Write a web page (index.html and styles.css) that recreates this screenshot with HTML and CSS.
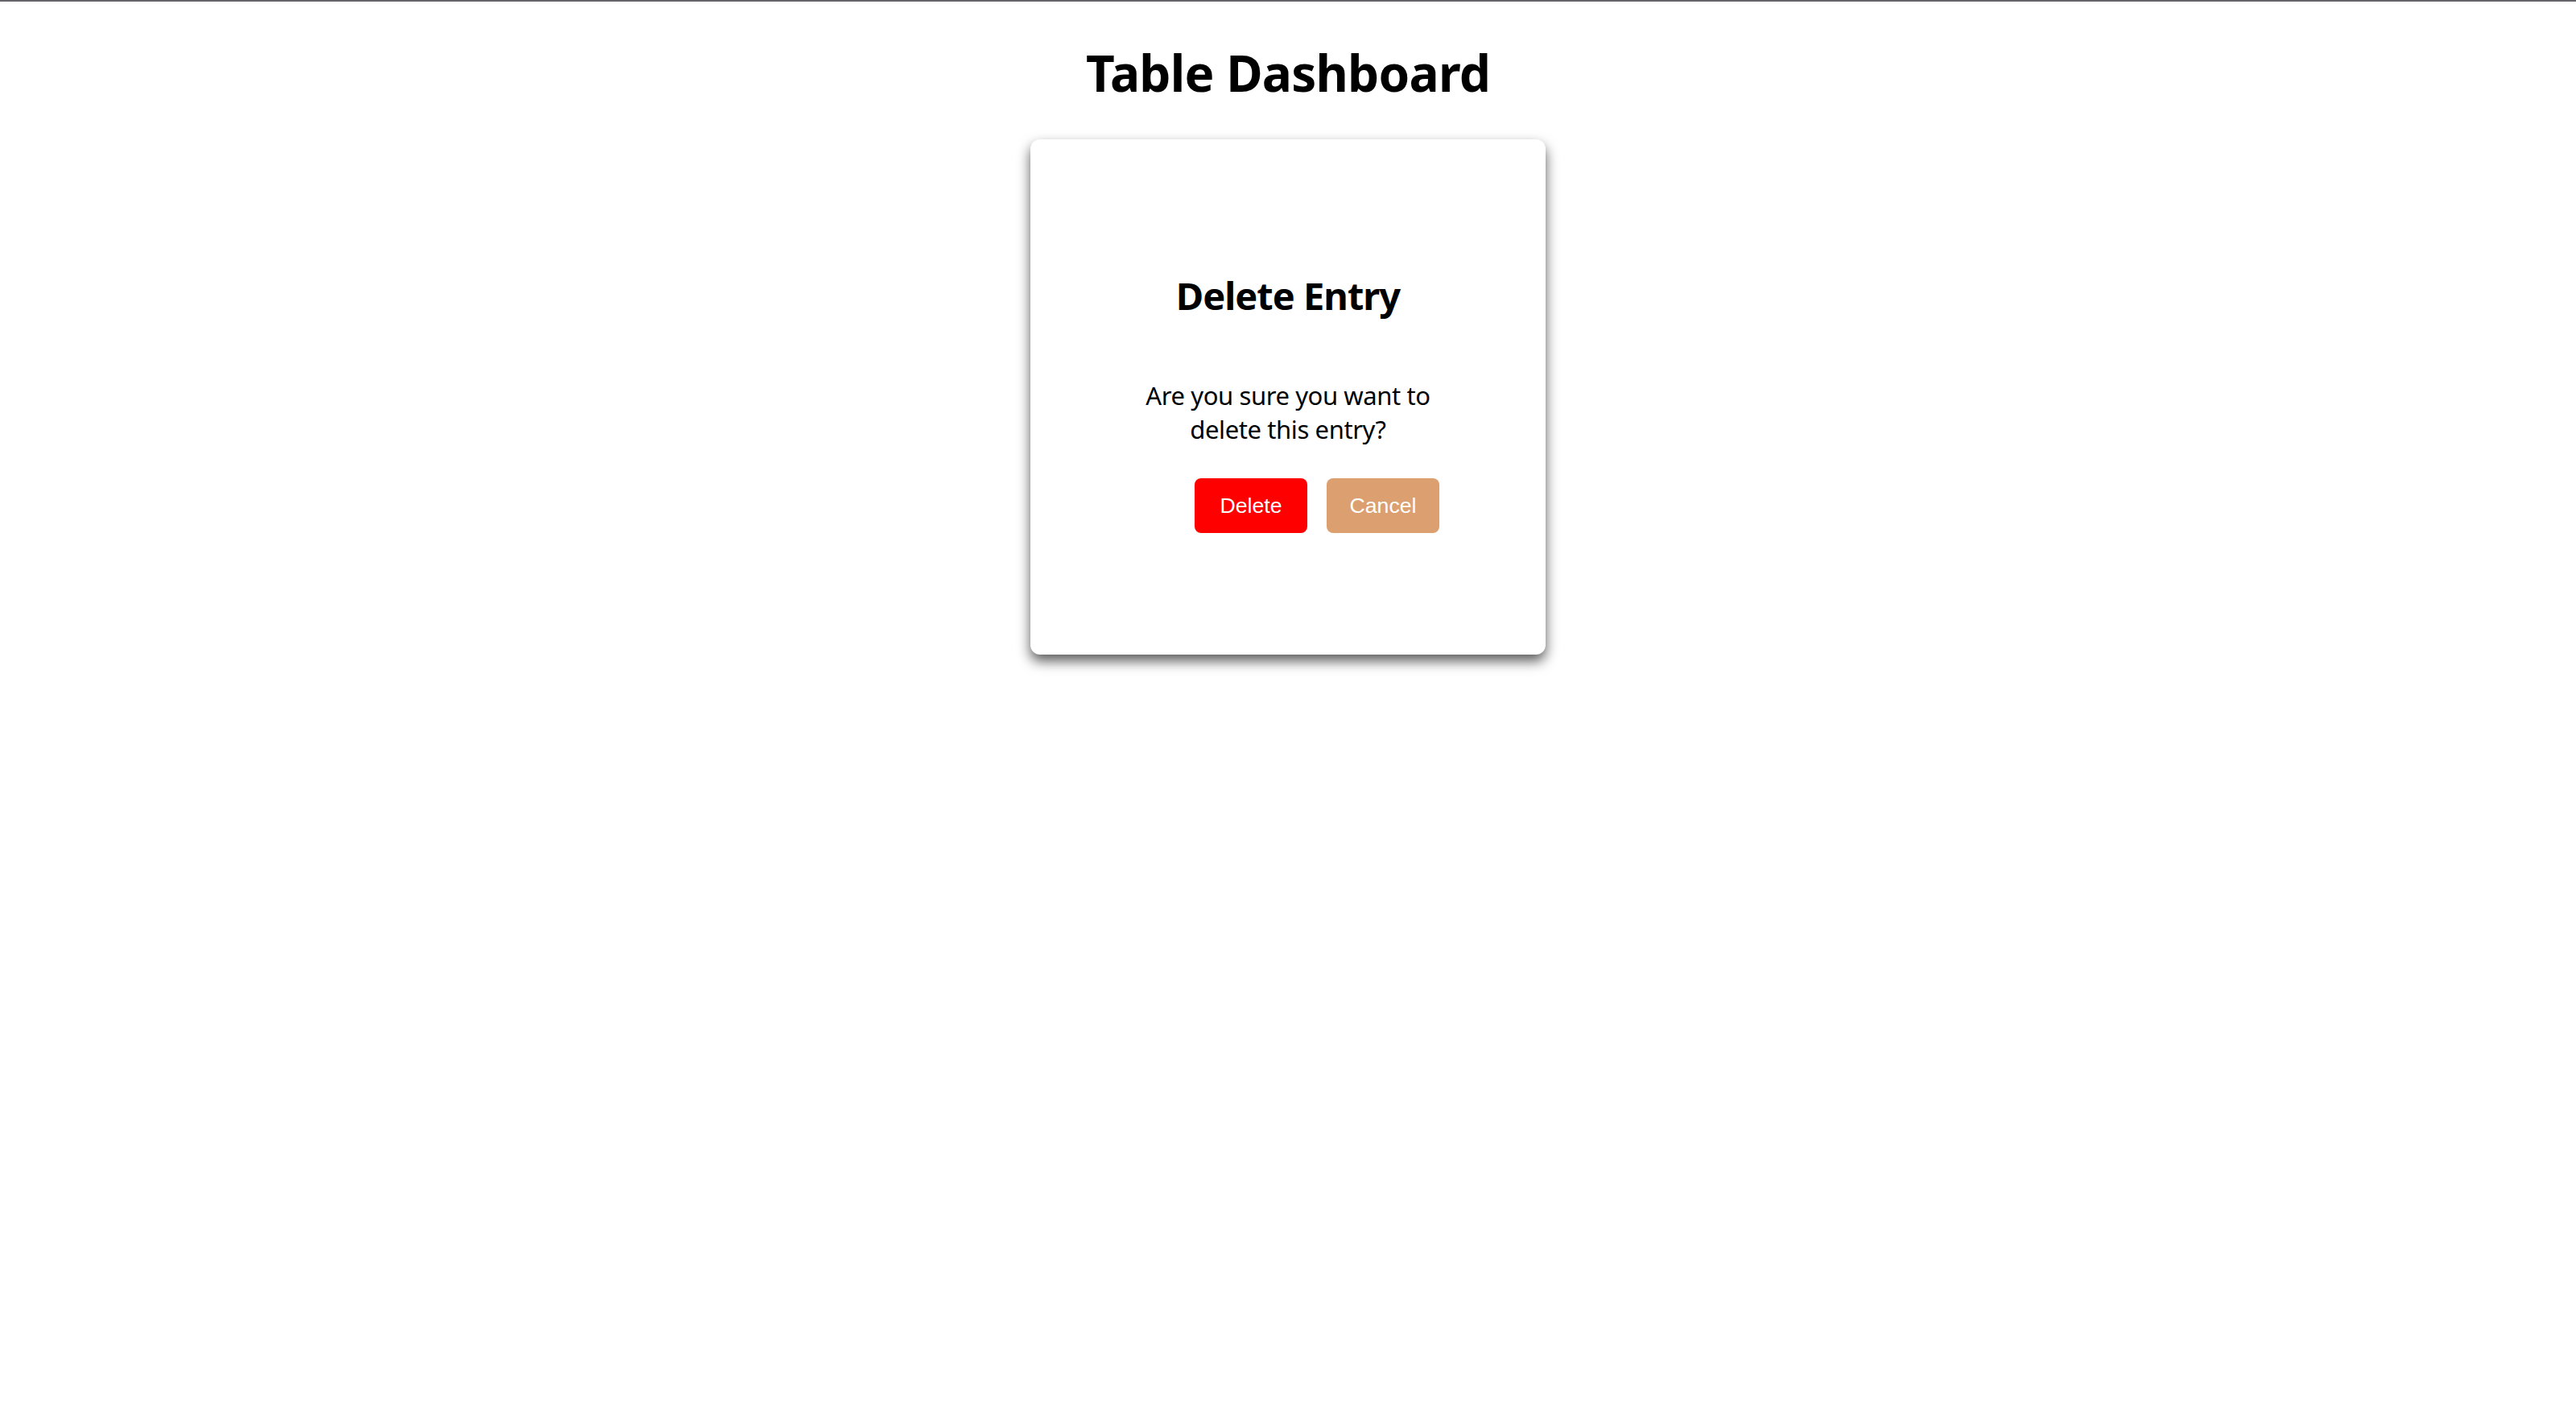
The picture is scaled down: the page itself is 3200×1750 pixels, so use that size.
FILE: index.html
```html
<!DOCTYPE html>
<html lang="en">
<head>
<meta charset="utf-8">
<title>Table Dashboard</title>
<link rel="stylesheet" href="styles.css">
</head>
<body>
<div class="topbar"></div>
<h1 class="title">Table Dashboard</h1>
<div class="card">
  <h2 class="card-title">Delete Entry</h2>
  <p class="card-text">Are you sure you want to delete this entry?</p>
  <div class="actions">
    <button class="btn btn-delete">Delete</button>
    <button class="btn btn-cancel">Cancel</button>
  </div>
</div>
</body>
</html>
```

FILE: styles.css
```css
html, body {
  margin: 0;
  padding: 0;
  background: #ffffff;
}
body {
  font-family: "Noto Sans", "Open Sans", sans-serif;
  color: #000000;
  font-size: 32px;
  min-height: 1750px;
}
.topbar {
  height: 2px;
  background: #646469;
}
.title {
  margin: 45px 0 0 0;
  font-size: 62px;
  letter-spacing: -0.75px;
  line-height: 86px;
  font-weight: 700;
  text-align: center;
}
.card {
  width: 640px;
  height: 640px;
  box-sizing: border-box;
  margin: 40px auto 0 auto;
  padding-top: 162px;
  background: #ffffff;
  border-radius: 12px;
  box-shadow: 0 8px 16px rgba(0, 0, 0, 0.65);
  display: flex;
  flex-direction: column;
  align-items: center;
}
.card-title {
  margin: 0 0 71px 0;
  font-size: 47px;
  letter-spacing: -1px;
  line-height: 64px;
  font-weight: 700;
  text-align: center;
}
.card-text {
  margin: 0 0 40px 0;
  max-width: 420px;
  font-size: 31px;
  letter-spacing: -0.4px;
  line-height: 42px;
  text-align: center;
}
.actions {
  display: flex;
  justify-content: center;
  gap: 24px;
  padding-left: 72px;
}
.btn {
  width: 140px;
  height: 68px;
  border: none;
  border-radius: 8px;
  color: #ffffff;
  font-family: "Liberation Sans", Arial, sans-serif;
  font-size: 26.67px;
  padding: 0;
  display: flex;
  align-items: center;
  justify-content: center;
}
.btn-delete {
  background: #ff0000;
}
.btn-cancel {
  background: #dca070;
}
```
